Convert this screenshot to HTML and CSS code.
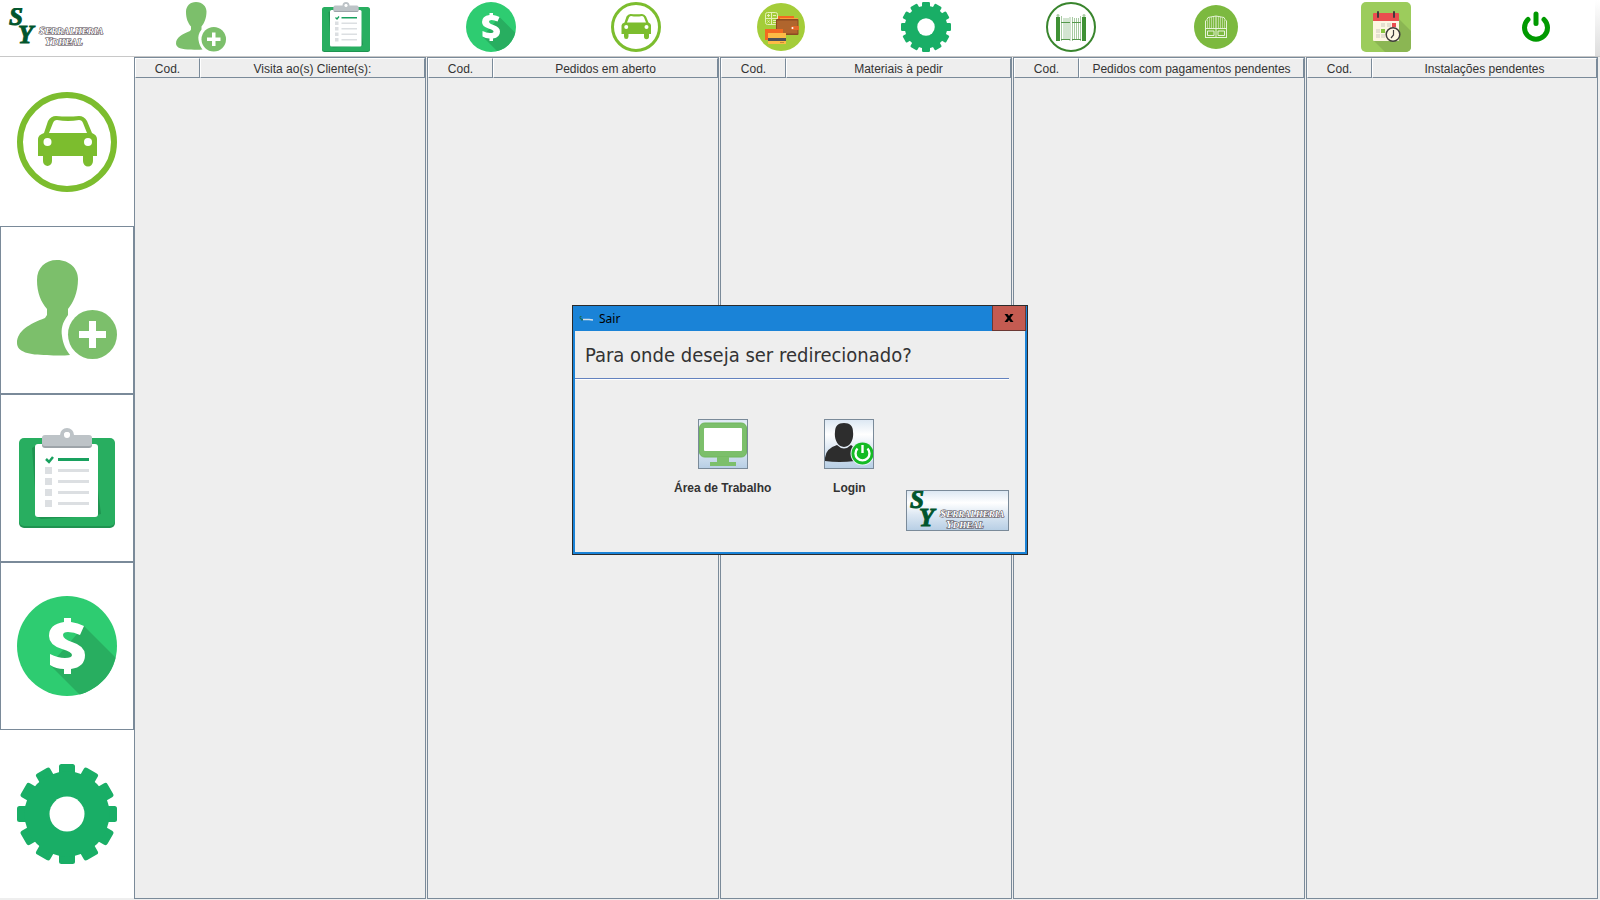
FILE: index.html
```
<!DOCTYPE html>
<html lang="pt-BR">
<head>
<meta charset="utf-8">
<title>Serralheria</title>
<link rel="stylesheet" href="styles.css">
</head>
<body>
<svg class="defs" aria-hidden="true">
  <defs>
    <clipPath id="disc"><circle cx="50" cy="50" r="50"/></clipPath>
    <clipPath id="tile"><rect width="50" height="50" rx="5"/></clipPath>
    <symbol id="logo" viewBox="0 0 101 39">
      <g class="logo-initials"><text x="3" y="17">S</text><text x="12" y="35">Y</text></g>
      <g class="logo-name"><text x="33" y="26">S<tspan class="logo-caps">ERRALHERIA</tspan></text><text x="39" y="37">Y<tspan class="logo-caps">DHEAL</tspan></text></g>
    </symbol>
    <symbol id="car" viewBox="0 0 100 100">
      <circle cx="50" cy="50" r="47" fill="#fff" stroke="#7cbd2e" stroke-width="6"/>
      <path fill="#7cbd2e" fill-rule="evenodd" d="M27 41 31 29Q34 24 39 24Q51 25 62 24Q67 24 70 29L75 41Q80 43 80 47V64H76V69A4.500 5 0 0 1 66 69V64H35V69A4.500 5 0 0 1 26 69V64H21V47Q21 43 27 41ZM32 41H70L66 31Q65 28 62 28Q51 30 40 28Q37 28 36 31Z"/>
      <circle cx="30.500" cy="50" r="4" fill="#fff"/><circle cx="71" cy="50" r="4" fill="#fff"/>
    </symbol>
    <symbol id="user-add" viewBox="0 0 100 100">
      <path fill="#7cbf6b" d="M40 0C53 0 61 9 61 19C61 33 56 43 51 49V55C45 63 44 69 45 76C46 84 49 90 53 95Q43 96 30 95C12 95 0 92 0 83C0 71 12 64 28 58L30 55V49C24 42 20 33 20 20C20 8 28 0 40 0Z"/>
      <circle cx="75.500" cy="74.500" r="24.500" fill="#7cbf6b"/>
      <path d="M75.500 61V88M62 74.500H89" stroke="#fff" stroke-width="7"/>
    </symbol>
    <symbol id="clipboard" viewBox="0 0 100 100">
      <rect x="2" y="12" width="96" height="88" rx="5" fill="#1f9350"/><rect x="2" y="10" width="96" height="88" rx="5" fill="#28ae60"/>
      <path d="M18 18 15 20 20 89 24 91 60 89ZM80 55 84 86 80 87Z" fill="#1f9350"/>
      <rect x="18" y="16" width="63" height="73" rx="3" fill="#fff"/>
      <circle cx="50" cy="7" r="5" fill="none" stroke="#bdc3c7" stroke-width="4"/>
      <rect x="25" y="9" width="50" height="11" rx="3" fill="#9da4a9"/><path d="M28 7H72Q75 7 75 10V15Q75 18 72 18H28Q25 18 25 15V10Q25 7 28 7Z" fill="#bdc3c7"/>
      <circle cx="50" cy="7" r="3" fill="#fff"/>
      <path d="M29 31 32 34 36 29" fill="none" stroke="#19a15f" stroke-width="2.500"/><path d="M41 31.500H72" stroke="#19a15f" stroke-width="3"/>
      <path d="M41 42.500H72M41 53.500H72M41 64.500H72M41 75.500H72" stroke="#dcdfe2" stroke-width="3"/>
      <path d="M28 39h7v7h-7zM28 50h7v7h-7zM28 61h7v7h-7zM28 72h7v7h-7z" fill="#dcdfe2"/>
    </symbol>
    <symbol id="dollar" viewBox="0 0 100 100">
      <circle cx="50" cy="50" r="50" fill="#2ecc71"/>
      <path clip-path="url(#disc)" d="M67 30 107 70 72 108 33 69Z" fill="#28ae60"/>
      <path fill="#fff" d="M47 22H54V26Q61 27 67 30L63 39Q57 36 51 36Q46 36 46 39Q46 43 55 46Q68 50 68 59Q68 71 54 73V78H47V73Q39 73 33 69V58Q41 62 48 62Q55 62 55 59Q55 56 45 53Q32 49 32 40Q32 28 47 26Z"/>
    </symbol>
    <symbol id="gear" viewBox="0 0 100 100">
      <g fill="#19ae66">
        <g id="teeth"><rect x="42" y="0" width="16" height="100" rx="2.500"/><rect x="0" y="42" width="100" height="16" rx="2.500"/></g>
        <use href="#teeth" transform="rotate(30 50 50)"/><use href="#teeth" transform="rotate(60 50 50)"/>
        <circle cx="50" cy="50" r="42.500"/>
      </g>
      <circle cx="50" cy="50" r="17.500" fill="#fff"/>
    </symbol>
    <symbol id="wallet" viewBox="0 0 50 50">
      <circle cx="25" cy="25" r="24" fill="#a4cd39"/>
      <g fill="none" stroke="#e4f1b5"><rect x="9.500" y="10.500" width="12" height="12" rx="2"/><path d="M15.500 10.500V22M9.500 16.500H21M11 13.500h3M12.500 12v3M17 13.500h3M11.500 18.500l2 2M13.500 18.500l-2 2M17 18.500h3M17 20.500h3"/></g>
      <path d="M22 14H38V18H22Z" fill="#f26a21"/><path d="M24 16H42V20H24Z" fill="#f9a03c"/>
      <rect x="20" y="17" width="22.500" height="16" rx="1" fill="#8b4b23"/><rect x="21" y="18.500" width="20.500" height="13" fill="#b0652d"/>
      <path d="M36 24H43V28H36Q34 26 36 24Z" fill="#e1682a"/><circle cx="36.500" cy="26" r="1" fill="#fff"/>
      <path d="M9 27H27V38H9Z" fill="#f26a21"/><path d="M12 31H30V42H12Z" fill="#fdbb45"/><path d="M12 36H30V39H12Z" fill="#4d5058"/><path d="M24 40.500H28" stroke="#c88c36"/>
    </symbol>
    <symbol id="gate" viewBox="0 0 50 50">
      <circle cx="25" cy="25" r="24" fill="#fff" stroke="#39852d" stroke-width="2"/>
      <path d="M10 15h4v24h-4zM36 15h4v24h-4z" fill="#3f9135"/><circle cx="12" cy="13.500" r="1.500" fill="#a9cba4"/><circle cx="38" cy="13.500" r="1.500" fill="#a9cba4"/>
      <path d="M15.500 14V39M18 16V38M20 16V38M22 16V38M24 15V39M26.500 15V39M28.500 16V38M30.500 16V38M32.500 16V38M34.500 14V39" stroke="#91bd8a" stroke-width=".8"/>
      <path d="M15 20.500H24M26 20.500H35M15 37.500H24M26 37.500H35" stroke="#55984c" stroke-width="1.200"/>
    </symbol>
    <symbol id="door" viewBox="0 0 50 50">
      <circle cx="25" cy="25" r="22" fill="#7cb93f"/>
      <g fill="none" stroke="#e7f3d9"><path d="M14.500 35.500V19Q16 18 17 15.500Q25 12.500 33 15.500Q34 18 35.500 19V35.500Z"/><path d="M25 14V35.500M14 26.500H36M14 35.500H36M16.500 29H23V33.500H16.500ZM27 29H33.500V33.500H27Z"/><path opacity=".55" d="M16.500 18V26M18.500 16V26M20.500 15V26M22.500 15V26M27.500 15V26M29.500 15V26M31.500 16V26M33.500 18V26"/></g>
    </symbol>
    <symbol id="calendar" viewBox="0 0 50 50">
      <rect width="50" height="50" rx="5" fill="#9ccc5c"/>
      <path clip-path="url(#tile)" d="M37 16 50 29V50H24L12 38Z" fill="#8bb653"/>
      <rect x="12" y="12" width="26" height="27" rx="1" fill="#fdf6e3"/><path d="M12 12Q12 11 13 11H37Q38 11 38 12V19H12Z" fill="#e94f4f"/>
      <path d="M17 10V15M33 10V15" stroke="#3f3c3c" stroke-width="2" stroke-linecap="round"/>
      <path d="M20 21h4v4h-4zM26 21h4v4h-4zM15 27h4v4h-4zM26 27h4v4h-4zM15 32h4v4h-4zM20 32h4v4h-4z" fill="#e5dfd0"/><path d="M31 21h4v4h-4z" fill="#e94f4f"/><path d="M20 27h4v4h-4z" fill="#86c440"/>
      <circle cx="32" cy="32.500" r="6.800" fill="#fdf6e3" stroke="#3f3c3c" stroke-width="1.500"/><path d="M32.500 28V33L30 36" fill="none" stroke="#3f3c3c" stroke-width="1.200"/>
    </symbol>
    <symbol id="power" viewBox="0 0 50 50">
      <path d="M17 17.500A11.500 11.500 0 1 0 33 17.500" fill="none" stroke="#090" stroke-width="5" stroke-linecap="round"/><path d="M25 12V21.500" stroke="#090" stroke-width="5" stroke-linecap="round"/>
    </symbol>
    <symbol id="desktop" viewBox="0 0 48 48">
      <rect x=".5" y="3" width="47" height="34" rx="5" fill="#7cbf6b" stroke="#6fb65d"/><rect x="5" y="8" width="38" height="23" rx="1" fill="#fff"/>
      <path d="M18 37H30V42H37V46H11V42H18Z" fill="#7cbf6b"/>
    </symbol>
    <symbol id="user-power" viewBox="0 0 48 48">
      <path d="M19 3C25 3 28 6 28 12C29 18 26 27 19 27S9 18 10 12C10 6 13 3 19 3ZM12 25Q19 32 26 25L30 28V41Q14 43 0 41Q-1 29 12 25Z" fill="#2d2d2d"/>
      <circle cx="37.500" cy="33.500" r="12" fill="#e5edf5"/><circle cx="37.500" cy="33.500" r="11" fill="#14bb24"/>
      <path d="M32.500 28.500A7 7 0 1 0 42.500 28.500M37.500 25V33" fill="none" stroke="#fff" stroke-width="2.400"/>
    </symbol>
  </defs>
</svg>

<div class="app">
  <header class="toolbar">
    <div class="brand"><svg role="img" aria-label="Serralheria"><use href="#logo"/></svg></div>
    <button class="tool" aria-label="Adicionar cliente"><svg><use href="#user-add"/></svg></button>
    <button class="tool" aria-label="Pedidos"><svg><use href="#clipboard"/></svg></button>
    <button class="tool" aria-label="Pagamentos"><svg><use href="#dollar"/></svg></button>
    <button class="tool" aria-label="Visitas"><svg><use href="#car"/></svg></button>
    <button class="tool" aria-label="Carteira"><svg><use href="#wallet"/></svg></button>
    <button class="tool" aria-label="Materiais"><svg><use href="#gear"/></svg></button>
    <button class="tool" aria-label="Portões"><svg><use href="#gate"/></svg></button>
    <button class="tool" aria-label="Portas"><svg><use href="#door"/></svg></button>
    <button class="tool" aria-label="Agenda"><svg><use href="#calendar"/></svg></button>
    <button class="tool" aria-label="Sair"><svg><use href="#power"/></svg></button>
  </header>
  <div class="workspace">
    <nav class="sidebar">
      <button class="side plain" aria-label="Visitas"><svg><use href="#car"/></svg></button>
      <button class="side" aria-label="Adicionar cliente"><svg><use href="#user-add"/></svg></button>
      <button class="side" aria-label="Pedidos"><svg><use href="#clipboard"/></svg></button>
      <button class="side" aria-label="Pagamentos"><svg><use href="#dollar"/></svg></button>
      <button class="side plain" aria-label="Materiais"><svg><use href="#gear"/></svg></button>
    </nav>
    <main class="boards">
      <section class="board"><table><thead><tr><th class="code">Cod.</th><th>Visita ao(s) Cliente(s):</th></tr></thead></table></section>
      <section class="board"><table><thead><tr><th class="code">Cod.</th><th>Pedidos em aberto</th></tr></thead></table></section>
      <section class="board"><table><thead><tr><th class="code">Cod.</th><th>Materiais à pedir</th></tr></thead></table></section>
      <section class="board"><table><thead><tr><th class="code">Cod.</th><th>Pedidos com pagamentos pendentes</th></tr></thead></table></section>
      <section class="board"><table><thead><tr><th class="code">Cod.</th><th>Instalações pendentes</th></tr></thead></table></section>
    </main>
  </div>
</div>

<div class="dialog" role="dialog" aria-labelledby="dialog-title">
  <div class="titlebar">
    <svg class="title-icon" aria-hidden="true" viewBox="0 0 16 16"><path d="M3.500 5.500H2V7.500H3.500M3 8 4 9.500 5 8" fill="none" stroke="#176b52"/><path d="M5 8.500H11L15 9" fill="none" stroke="#d4dfe8" stroke-width="1.500"/></svg>
    <span id="dialog-title">Sair</span>
    <button class="close" aria-label="Fechar"><svg viewBox="0 0 10 10"><path d="M.5 1H3.500L5 3 6.500 1H9.500L6.500 5 9.500 9H6.500L5 7 3.500 9H.5L3.500 5Z"/></svg></button>
  </div>
  <div class="dialog-body">
    <h1>Para onde deseja ser redirecionado?</h1>
    <hr>
    <div class="choices">
      <div class="choice"><button class="metal" id="go-desktop" aria-labelledby="lbl-desktop"><svg><use href="#desktop"/></svg></button><label id="lbl-desktop" for="go-desktop">Área de Trabalho</label></div>
      <div class="choice"><button class="metal" id="go-login" aria-labelledby="lbl-login"><svg><use href="#user-power"/></svg></button><label id="lbl-login" for="go-login">Login</label></div>
      <button class="metal logo-button" aria-label="Serralheria"><svg><use href="#logo"/></svg></button>
    </div>
  </div>
</div>
</body>
</html>
```
FILE: styles.css
```
* { box-sizing: border-box; }
body {
  margin: 0;
  background: #eee;
  color: #333;
  font: 12px/16px "Liberation Sans", Arial, sans-serif;
}
button { margin: 0; padding: 0; border: 0; background: none; font: inherit; color: inherit; }
svg { display: block; }
.defs { position: absolute; width: 0; height: 0; }
.app { display: flex; flex-direction: column; min-height: 100vh; }

.toolbar {
  display: grid;
  grid-template-columns: 128fr repeat(8, 145fr) 195fr 105fr 12fr;
  align-items: center;
  height: 57px;
  padding-bottom: 2px;
  background: linear-gradient(#fff, #ddd) right / 5px 100% no-repeat, #fff;
  border-bottom: 1px solid #c8c8c8;
}
.brand { padding-left: 6px; }
.brand svg { width: 101px; height: 39px; }
.tool { display: flex; justify-content: center; }
.tool svg { width: 50px; height: 50px; }
.logo-initials { font: italic bold 25px "Liberation Serif", serif; fill: #00552c; stroke: #00552c; stroke-width: 1px; }
.logo-name { font: italic bold 11px "Liberation Serif", serif; fill: #fff; stroke: #4a4048; stroke-width: 1px; paint-order: stroke; }
.logo-caps { font-size: 9px; }

.workspace { flex: 1; display: flex; padding: 0 2px 1px 0; }
.sidebar { flex: none; width: 134px; display: grid; grid-template-rows: repeat(5, 1fr); background: #fff; margin-bottom: 1px; padding-top: 1px; }
.side { display: flex; align-items: center; justify-content: center; border: 1px solid #7a8a99; }
.side.plain { border-color: transparent; }
.side svg { width: 100px; height: 100px; }
.boards { flex: 1; display: grid; grid-template-columns: repeat(5, 1fr); gap: 1px; }
.board { border: 1px solid #7a8a99; min-width: 0; }
table { width: 100%; table-layout: fixed; border-collapse: separate; border-spacing: 0; }
th {
  height: 20px;
  padding: 2px 0 0;
  font-weight: normal;
  line-height: 16px;
  text-align: center;
  white-space: nowrap;
  border: solid;
  border-width: 1px;
  border-color: #fff #7a8a99 #7a8a99 #fff;
}
.code { width: 65px; }

.dialog {
  position: absolute;
  left: calc(50% - 228px);
  top: 305px;
  width: 456px;
  background: #eee;
  border: 1px solid #2b2b2b;
  box-shadow: inset 0 0 0 2px #1a83d7;
}
.titlebar { display: flex; align-items: center; height: 25px; padding-left: 5px; background: #1a83d7; color: #000; font: 12px/16px "Noto Sans", sans-serif; }
.title-icon { width: 16px; height: 16px; margin-right: 5px; }
.close { display: flex; align-items: center; justify-content: center; width: 34px; height: 25px; margin-left: auto; margin-right: 1px; background: #c45b51; border: solid #6b3833; border-width: 0 1px 1px; }
.close svg { width: 10px; height: 10px; }
.dialog-body { padding: 0 18px 23px 2px; }
h1 { margin: 0; padding: 10px 10px 9px; font: 20px/28px "DejaVu Sans Condensed", "DejaVu Sans", sans-serif; font-stretch: condensed; white-space: nowrap; }
hr { margin: 0; height: 2px; border: 0; border-top: 1px solid #6382bf; background: #fff; }
.choices { display: flex; align-items: flex-start; height: 151px; padding: 39px 0 0 99px; }
.choice { display: flex; flex-direction: column; align-items: center; gap: 11px; font-weight: bold; white-space: nowrap; }
.choice + .choice { margin-left: 53px; }
.metal { width: 50px; height: 50px; border: 1px solid #7a8a99; background: linear-gradient(#dde8f3, #fff 30%, #dde8f3 60%, #b8cfe5); }
.metal svg { width: 48px; height: 48px; }
.logo-button { width: 103px; height: 41px; align-self: flex-end; margin-left: auto; flex: none; }
.logo-button svg { width: 101px; height: 39px; }
```
